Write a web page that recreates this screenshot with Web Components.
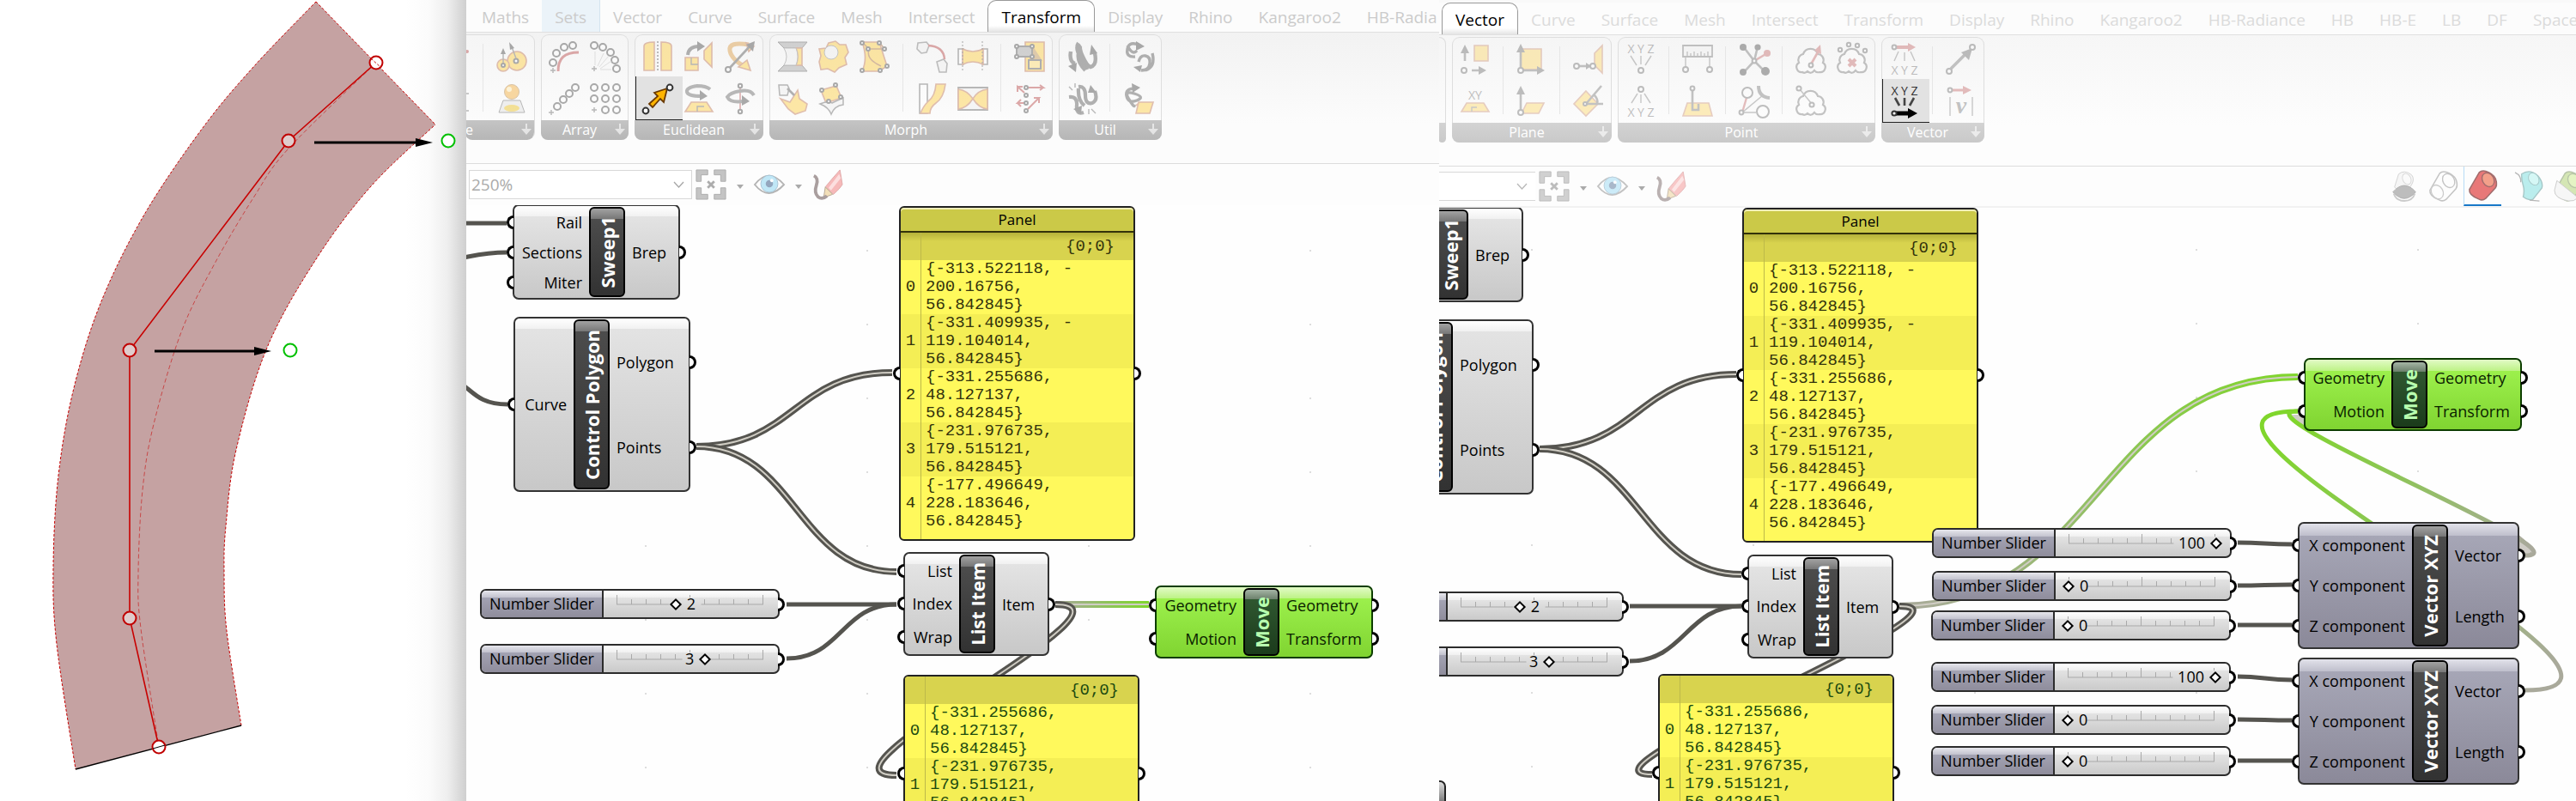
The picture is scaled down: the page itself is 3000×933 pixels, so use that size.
<!DOCTYPE html>
<html lang="en">
<head>
<meta charset="utf-8">
<title>Moving control points</title>
<style>
html, body { height: 100%; margin: 0; }
body {
  display: grid;
  grid-template-columns: 543fr 1133fr 1324fr;
  background: #fff;
  color: #000;
  font: 18px/24px "Open Sans", "Noto Sans", sans-serif;
  overflow: hidden;
}
</style>
</head>
<body>
<rhino-viewport></rhino-viewport>

<gh-window>
  <tab-strip slot="tabs" tabs="Maths,Sets,Vector,Curve,Surface,Mesh,Intersect,Transform,Display,Rhino,Kangaroo2,HB-Radia" active="Transform" hover="Sets"></tab-strip>
  <ribbon-group slot="groups" class="first" label="e" sections="dots/dots2|orbs/orb"></ribbon-group>
  <ribbon-group slot="groups" label="Array" sections="arrcurve,arrpolar/arrline,arrgrid"></ribbon-group>
  <ribbon-group slot="groups" label="Euclidean" selected="move" sections="mirror,orient,rot3d/move,rotate,rotaxis"></ribbon-group>
  <ribbon-group slot="groups" label="Morph" sections="boxmorph,gear,twist/bag,sheet|hands,maelstrom/flow,taper|project/field"></ribbon-group>
  <ribbon-group slot="groups" label="Util" sections="split/split2|group/ungroup"></ribbon-group>
  <zoom-bar slot="bar" zoom="250%"></zoom-bar>
  <gh-canvas pan-x="543" pan-y="239">
    <gh-wires set="a"></gh-wires>
    <gh-node x="597" y="238" w="195" h="111" in="89" name="Sweep1" inputs="Rail,Sections,Miter" outputs="Brep"></gh-node>
    <gh-node x="598" y="369" w="206" h="204" in="70" name="Control Polygon" inputs="Curve" outputs="Polygon,Points"></gh-node>
    <gh-panel x="1047" y="240" w="275" h="390" name="Panel" rows="{-313.522118, -;200.16756,;56.842845}|{-331.409935, -;119.104014,;56.842845}|{-331.255686,;48.127137,;56.842845}|{-231.976735,;179.515121,;56.842845}|{-177.496649,;228.183646,;56.842845}"></gh-panel>
    <gh-slider x="559" y="686" value="4" text="2" side="right" gap="36 58"></gh-slider>
    <gh-slider x="559" y="750" value="6" text="3" side="left" gap="45 64"></gh-slider>
    <gh-node x="1052" y="643" w="170" h="121" in="65" name="List Item" inputs="List,Index,Wrap" outputs="Item"></gh-node>
    <gh-node class="green" x="1345" y="682" w="254" h="85" in="103" name="Move" inputs="Geometry,Motion" outputs="Geometry,Transform"></gh-node>
    <gh-panel class="picked" x="1052" y="786" w="275" h="230" rows="{-331.255686,;48.127137,;56.842845}|{-231.976735,;179.515121,;56.842845}"></gh-panel>
  </gh-canvas>
</gh-window>

<gh-window class="second">
  <tab-strip slot="tabs" tabs="Vector,Curve,Surface,Mesh,Intersect,Transform,Display,Rhino,Kangaroo2,HB-Radiance,HB,HB-E,LB,DF,Space" active="Vector"></tab-strip>
  <ribbon-group slot="groups" class="edge" label="" sections=""></ribbon-group>
  <ribbon-group slot="groups" label="Plane" sections="plnorm/plxy|plorig/plcons|plalign/plrot"></ribbon-group>
  <ribbon-group slot="groups" label="Point" sections="ptxyz/ptdec|dist/ptproj|hub/closest|cloudarrow,cloudx/cloudpt,"></ribbon-group>
  <ribbon-group slot="groups" label="Vector" selected="vecxyz" sections="vecdec/vecxyz|vec2pt/veclen"></ribbon-group>
  <zoom-bar slot="bar" zoom="" previews></zoom-bar>
  <gh-canvas pan-x="1676" pan-y="243">
    <gh-wires set="b"></gh-wires>
    <gh-node x="1579" y="242" w="195" h="111" in="89" name="Sweep1" inputs=",," outputs="Brep"></gh-node>
    <gh-node x="1580" y="373" w="206" h="204" in="70" name="Control Polygon" inputs="" outputs="Polygon,Points"></gh-node>
    <gh-panel x="2029" y="243" w="275" h="390" name="Panel" rows="{-313.522118, -;200.16756,;56.842845}|{-331.409935, -;119.104014,;56.842845}|{-331.255686,;48.127137,;56.842845}|{-231.976735,;179.515121,;56.842845}|{-177.496649,;228.183646,;56.842845}"></gh-panel>
    <gh-slider class="nolabel" x="1542" y="690" value="4" text="2" side="right" gap="36 58"></gh-slider>
    <gh-slider class="nolabel" x="1542" y="754" value="6" text="3" side="left" gap="45 64"></gh-slider>
    <gh-node x="2035" y="647" w="170" h="121" in="65" name="List Item" inputs="List,Index,Wrap" outputs="Item"></gh-node>
    <gh-panel class="picked" x="1931" y="786" w="275" h="230" rows="{-331.255686,;48.127137,;56.842845}|{-231.976735,;179.515121,;56.842845}"></gh-panel>
    <gh-node x="1604" y="910" w="80" h="80" in="20" name="" inputs="" outputs="" class="stub"></gh-node>
    <gh-node class="green" x="2683" y="418" w="254" h="85" in="102" name="Move" inputs="Geometry,Motion" outputs="Geometry,Transform"></gh-node>
    <gh-slider x="2250" y="616" value="10" text="100" side="left" gap="72 100"></gh-slider>
    <gh-slider x="2250" y="666" value="0" text="0" side="right" gap="0 13"></gh-slider>
    <gh-slider x="2249" y="712" value="0" text="0" side="right" gap="0 13"></gh-slider>
    <gh-slider x="2249" y="772" value="10" text="100" side="left" gap="72 100"></gh-slider>
    <gh-slider x="2249" y="822" value="0" text="0" side="right" gap="0 13"></gh-slider>
    <gh-slider x="2249" y="870" value="0" text="0" side="right" gap="0 13"></gh-slider>
    <gh-node class="slate" x="2676" y="609" w="258" h="148" in="133" name="Vector XYZ" inputs="X component,Y component,Z component" outputs="Vector,Length"></gh-node>
    <gh-node class="slate" x="2676" y="767" w="258" h="148" in="133" name="Vector XYZ" inputs="X component,Y component,Z component" outputs="Vector,Length"></gh-node>
  </gh-canvas>
</gh-window>

<script>
const Y = 'fill="#ffc928" stroke="#b8643c" stroke-width="1.6"';
const G = 'fill="none" stroke="#444" stroke-width="2.6"';
const T = 'fill="none" stroke="#555" stroke-width="1.4"';
const o = (x, y, r = 3) => `<circle cx="${x}" cy="${y}" r="${r}" fill="#fff" stroke="#333" stroke-width="2"/>`;
const d = (a, p) => `<path ${a} d="${p}"/>`;
const tx = (y, s) => `<text x="18" y="${y}" text-anchor="middle" font-size="14" font-family="Open Sans" fill="#333">${s}</text>`;
const K = 'fill="#333"', R = '#b03030';
const cloud = d('fill="#fff" stroke="#444" stroke-width="2.2"', 'M8 33a6 6 0 0 1-4-11a7 7 0 0 1 5-10a9 9 0 0 1 17 0a7 7 0 0 1 6 10a6 6 0 0 1-4 11q-4 1-6-2q-4 5-8 1q-3 3-6 1z');

/* 36x36 drawings of the ribbon tools */
const ICONS = {
  dots: `<circle cx="1" cy="12" r="2" fill="${R}"/>`,
  dots2: d(T, 'M0 12h3M0 32h3'),
  orbs: `<circle cx="24" cy="23" r="11" ${Y}/><circle cx="8" cy="28" r="7" ${Y}/>` + o(23, 23, 2.5) + o(8, 28, 2) + d(T, 'M23 20L17 4M8 25V12') + d(K, 'M15 1l1 9 5-2zM8 8l-3 7h6z'),
  orb: `<path fill="#ddd" stroke="#555" d="M8 20h20l5 14H3z"/><ellipse cx="18" cy="29" rx="9" ry="4" fill="#e8b800"/><circle cx="18" cy="10" r="8.5" fill="#f5a31c" stroke="#a8742c"/><circle cx="15" cy="7" r="3" fill="#ffe9a8"/>`,
  arrcurve: d(`fill="none" stroke="${R}" stroke-width="3"`, 'M11 35C11 20 18 13 35 13') + o(28, 5, 4) + o(18, 7, 4) + o(9, 14, 4) + o(5, 25, 4) + d(T, 'M5 31v6M2 34h6'),
  arrpolar: o(5, 5, 4) + o(15, 7, 4) + o(24, 13, 4) + o(29, 22, 4) + o(31, 32, 4) + d(T, 'M5 29v6M2 32h6') + d('fill="none" stroke="#bbb"', 'M6 28V12M9 29l7-15M11 30l11-13M12 32l13-9M12 33h13'),
  arrline: o(31, 5, 4) + o(24, 12, 4) + o(17, 19, 4) + o(10, 27, 4) + d(T, 'M3 31v6M0 34h6'),
  arrgrid: [5, 18, 31].map(y => [5, 18, 31].map(x => x == 5 && y == 31 ? d(T, 'M5 28v6M2 31h6') : o(x, y, 4)).join('')).join(''),
  mirror: d(Y, 'M2 34V6q0-5 12-5v33zM34 34V6q0-5-12-5v33z') + d('fill="none" stroke="#333" stroke-dasharray="2 2" stroke-width="1.5"', 'M18 0v36'),
  orient: d(Y, 'M2 19h15v15H2zM33 2v28l-9-9V11z') + d(T, 'M9 19v8h8') + d('fill="none" stroke="#444" stroke-width="4"', 'M5 16Q6 6 18 6') + d(K, 'M16 0l9 6-9 6z'),
  rot3d: d('fill="none" stroke="#d8902c" stroke-width="5"', 'M28 4Q4 0 6 11t20 20') + d(Y, 'M30 34l-14-4 10-8zM25 2l9 4-6 6z') + d(G, 'M5 32L30 5') + d(K, 'M35 0l-2 12-8-8z') + o(4, 33, 3),
  move: d('fill="#ffb400" stroke="#6b3a00" stroke-width="1.8"', 'M8 24l10-9-4-4 15-5-4 16-4-4-9 10z') + o(32, 5, 3.4) + o(4, 32, 3.4),
  rotate: d('fill="none" stroke="#555" stroke-width="4"', 'M31 7Q26 3 16 3Q3 5 4 10t17 5') + d(K, 'M19 8l9 7-9 5z') + d(Y, 'M9 22h18l7 11H2z') + d(T, 'M16 33v-6h8'),
  rotaxis: d(`fill="none" stroke="${R}" stroke-width="1.5"`, 'M18 3v30') + d('fill="none" stroke="#555" stroke-width="4"', 'M34 14Q30 7 18 9T3 16Q6 23 22 21') + d(K, 'M20 14l9 7-9 5z') + o(18, 3, 2.2) + o(18, 33, 2.2),
  boxmorph: d('fill="#999" stroke="#444"', 'M1 1h34l-6 7H8zM1 35h34l-6-7H8z') + d(Y, 'M22 8h7v20h-7q4-10 0-20z') + d('fill="#eee" stroke="#777"', 'M8 8q6 10 0 20h14q4-10 0-20z'),
  gear: d(Y, 'M12 2l8-2 5 4 7 0 3 9-4 6 2 8-9 4-5 5-8-4-8 1-2-9 2-7-2-8 8-1z') + '<circle cx="15" cy="13" r="8" fill="#eee" stroke="#777"/>',
  twist: d(Y, 'M3 1h20l9 28-9 6H3q7-15 0-34z') + d('fill="none" stroke="#9c5a20" stroke-width="1.5"', 'M3 1l8 8h18l-6-8M11 9q-4 12 14 20') + o(3, 2, 2) + o(23, 2, 2) + o(10, 9, 2) + o(29, 9, 2) + o(32, 29, 2) + o(3, 34, 2) + o(24, 34, 2),
  bag: d('fill="#eee" stroke="#555" stroke-width="1.5"', 'M2 2h10l2 4-2 8H3z') + d(Y, 'M4 18l11 4 9-14 2 10 9 6-2 8-12 4-8-6z') + d(G, 'M12 6l8 8'),
  sheet: d(Y, 'M3 8l18-5 6 14-18 6z') + d('fill="#eee" stroke="#555" stroke-width="1.5"', 'M2 24q10-4 14-1 6-3 13-6v8q-10 1-14 11-3-8-13-12z') + o(4, 8, 2) + o(20, 2, 2) + o(26, 16, 2) + o(12, 21, 2),
  hands: d('fill="#eee" stroke="#666" stroke-width="1.6"', 'M2 2l10-1 3 4-3 8-6 1-5-5zM24 24l8-3 4 5-1 10h-8z') + d(`fill="none" stroke="${R}" stroke-width="2.5"`, 'M14 5Q32 6 33 21'),
  maelstrom: d('fill="#fff" stroke="#555" stroke-width="1.6"', 'M1 9h6v18H1zM29 9h6v18h-6z') + d(Y, 'M6 9q12 6 24 0v18q-12-6-24 0z') + d('fill="none" stroke="#333" stroke-dasharray="2 2"', 'M6 0v36M29 0v36'),
  flow: d('fill="#fff" stroke="#555" stroke-width="1.6"', 'M4 1h9v34H4z') + d(Y, 'M5 35q3-8 9-14 8-6 9-20h11q-2 16-11 22-7 5-7 12z'),
  taper: d('fill="#eee" stroke="#555" stroke-width="1.8"', 'M1 5h34v26H1z') + d(Y, 'M1 7q10 1 17 11Q11 29 1 30zM35 7q-11 1-17 11 7 11 17 12z'),
  project: d(Y, 'M13 1h22v34H13z') + d('fill="#b8863c"', 'M22 6l11 17H17z') + d('fill="#ffd75a" stroke="#444" stroke-width="2"', 'M17 22h14v10H17z') + d('fill="#999" stroke="#444" stroke-width="2"', 'M3 6h18v12H3z') + o(3, 6, 2) + o(21, 6, 2) + o(3, 18, 2) + o(21, 18, 2),
  field: d(`fill="none" stroke="${R}" stroke-width="2"`, 'M14 5h20l-4-3m4 3l-4 3M12 11L4 4v6m0-6h6M12 23H4l4-4m-4 4l4 4M16 30l13-13h-6m6 0v6') + o(14, 5, 2) + o(14, 14, 2) + o(14, 23, 2) + o(14, 32, 2),
  split: d('fill="none" stroke="#444" stroke-width="4.4"', 'M5 12q-2 12 5 14M14 2q-4 6 2 16t8 15M17 5q-3 2 2 13t9 12q8-2 5-16M14 14q-2 10 8 20') + d(K, 'M27 16l2-12 7 10zM2 29l10-4-1 11z'),
  split2: d('fill="none" stroke="#444" stroke-width="4.2"', 'M3 16q10-1 9 10t8 8M14 4q8-1 8 10t8 9q7-3 3-14M14 6q-1 14 7 20') + d(K, 'M25 11l3-9 7 9zM8 30l10-4-1 10z') + d(T, 'M3 4l4 4M10 0v5M29 30l5 5M26 30v6'),
  group: d('fill="none" stroke="#444" stroke-width="3.4"', 'M20 5Q7-1 5 9t9 9M5 5q6 12 11 6M18 24q2-8 8-7t5 9-10 8M34 14q4 16-8 20') + d(K, 'M15 0l10 6-10 5zM22 28l-10 2 8 6z'),
  ungroup: d('fill="none" stroke="#444" stroke-width="3.4"', 'M14 6Q2 6 4 15t12 5-3-8-6 7 6 6') + d(K, 'M10 0l10 5-9 6z') + d(Y, 'M18 22h17l-4 13H15zM15 26l4-4'),
  plnorm: d(Y, 'M17 2h16v18H17z') + d(G, 'M6 20V8M14 31h9') + d(K, 'M6 1l-5 10h10zM31 31l-9-5v10z') + o(5, 31),
  plxy: tx(16, 'XY') + d(Y, 'M8 20h20l6 10H2z') + d(T, 'M14 30v-5h6'),
  plorig: d(Y, 'M5 6h24v24H5z') + d(G, 'M5 30V8M5 31h20') + d(K, 'M5 0L0 10h10zM33 31l-9-5v10z') + o(5, 31),
  plcons: d(Y, 'M12 20h20l-6 12H6z') + d(G, 'M5 30V8') + d(K, 'M5 0L0 10h10z') + o(5, 31),
  plalign: d(Y, 'M34 2v32l-9-9V11z') + d(G, 'M6 26h14') + d(K, 'M21 26l-6-4v8z') + o(4, 26) + o(23, 26),
  plrot: d(Y, 'M15 6l14 15-14 14L1 21z') + d(G, 'M15 21L33 0M24 10q6 6 4 11M15 21h20') + o(14, 21, 2),
  ptxyz: tx(11, 'X Y Z') + d(T, 'M6 14l7 11M18 14v10M30 14l-7 11') + o(18, 31),
  ptdec: tx(36, 'X Y Z') + d(T, 'M14 9L7 20M18 10v10M22 9l7 11') + o(18, 4),
  dist: d('fill="#eee" stroke="#444" stroke-width="1.8"', 'M1 2h34v13H1z') + d(T, 'M6 14V9M10 14v-3M14 14V9M18 14v-3M22 14V9M26 14v-3M30 14V9M4 15v13M32 15v13') + o(4, 30) + o(32, 30),
  ptproj: d(Y, 'M6 20h25l4 15H1z') + d(G, 'M12 4v24h7v-7') + o(12, 3, 2.4),
  hub: d(G, 'M18 20L5 3M18 20L22 3M18 20L5 34M18 20l13 13') + d(`stroke="${R}" stroke-width="2.6"`, 'M18 20L33 11') + `<circle cx="5" cy="4" r="4"/><circle cx="22" cy="4" r="3.6"/><circle cx="5" cy="33" r="4"/><circle cx="31" cy="32" r="5"/><circle cx="33" cy="11" r="4" fill="${R}"/>` + o(18, 20, 2.4),
  closest: d(T, 'M4 31L28 11M4 31h16') + d(`stroke="${R}" stroke-width="2.4"`, 'M4 31L9 14') + d('fill="none" stroke="#444" stroke-width="4"', 'M23 0q0 13 13 14') + o(10, 8, 6) + o(28, 30, 7) + o(3, 31, 2.4),
  cloudarrow: cloud + d(`stroke="${R}" stroke-width="2.6"`, 'M18 24L27 8') + `<path fill="${R}" d="M29 1l1 11-8-4z"/>` + o(18, 25, 2.4),
  cloudx: cloud + d(`stroke="${R}" stroke-width="4"`, 'M14 18l8 8M22 18l-8 8') + o(4, 7, 2.2) + o(14, 1, 2.2) + o(24, 2, 2.2) + o(33, 8, 2.2),
  cloudpt: cloud + d(T, 'M5 4l14 17') + o(4, 3, 2.6) + o(19, 22, 2.6),
  vecdec: d(`stroke="${R}" stroke-width="4"`, 'M8 4h14') + `<path fill="${R}" d="M31 4l-9-5v10z"/>` + d(T, 'M11 9L6 20M18 10v10M25 9l5 11') + tx(36, 'X Y Z') + o(6, 4, 2.4),
  vecxyz: tx(11, 'X Y Z') + d(G, 'M7 14l5 9M18 14v9M29 14l-5 9') + d('stroke="#000" stroke-width="5"', 'M8 32h14') + d('fill="#000"', 'M33 32l-11-6v12z') + o(6, 32, 2.6),
  vec2pt: d('stroke="#444" stroke-width="3.6"', 'M6 29L24 11') + d(K, 'M31 5l-4 14-9-9z') + o(4, 32) + o(31, 4),
  veclen: d(`stroke="${R}" stroke-width="3"`, 'M8 5h12') + `<path fill="${R}" d="M30 5l-10-5v10z"/>` + d(T, 'M5 13v22M31 13v22') + `<text x="18" y="32" text-anchor="middle" font-size="28" font-style="italic" font-weight="bold" font-family="Liberation Serif" fill="#444">v</text>` + o(5, 5, 2.4),
  fit: d('fill="#888" stroke="#555"', 'M1 1h14v6H7v8H1zM37 1H23v6h8v8h6zM1 37h14v-6H7v-8H1zM37 37H23v-6h8v-8h6z') + d('stroke="#555" stroke-width="3"', 'M15 15l8 8M23 15l-8 8'),
  eye: d('fill="#fff" stroke="#666" stroke-width="2"', 'M1 19Q18-3 37 19 18 40 1 19z') + '<circle cx="19" cy="18" r="10.5" fill="#7fd0f0" stroke="#4d86a8"/><circle cx="19" cy="18" r="4.5" fill="#234a78"/><circle cx="22" cy="14" r="2" fill="#fff"/>',
  pencil: d('fill="#f07070" stroke="#c05050"', 'M34 1Q24 12 16 22l10 9Q34 24 37 19z') + d('fill="#fbc0c0"', 'M33 6L20 23l3 3 12-15z') + d('fill="#e8c070" stroke="#6b4a20"', 'M16 22l9 9-11 4z') + d('fill="none" stroke="#503838" stroke-width="4"', 'M2 8q6 3 3 12t2 14q5 4 11-1')
};
const cyl = (fill, inner, edge) => d(`fill="${fill}" stroke="${edge}" stroke-width="1.6"`, 'M2 24L14 3Q18-1 26 3T35 14q1 5-1 8L22 35q-4 3-8 1Q1 31 2 24z') + `<ellipse cx="25" cy="12" rx="7" ry="9" transform="rotate(-30 25 12)" fill="${inner}" stroke="${edge}" stroke-width="1.4"/>`;
Object.assign(ICONS, {
  pvnone: d('fill="#eee" stroke="#999"', 'M6 20L11 4Q18-2 27 5q4 5 0 12l-4 6H9z') + '<ellipse cx="21" cy="10" rx="5" ry="7" fill="#f8f8f8" stroke="#aaa" transform="rotate(-25 21 10)"/>' + d('fill="#666" stroke="#444"', 'M4 26q14-16 28 0-14 16-28 0z') + d('fill="none" stroke="#888" stroke-width="2"', 'M5 28q3 9 13 9t13-9'),
  pvwire: cyl('none', 'none', '#777') + '<ellipse cx="11" cy="26" rx="7" ry="9" transform="rotate(-30 11 26)" fill="none" stroke="#888" stroke-width="1.4"/>',
  pvshade: cyl('#e04040', '#f07a5a', '#7a3030'),
  pvsel: d('fill="#60d8d8" stroke="#308080" stroke-width="1.5"', 'M8 4Q18-3 28 6q7 8 5 15L22 35q-6 2-12-3 2-8 0-14T8 4z') + '<ellipse cx="23" cy="10" rx="6" ry="8" transform="rotate(-30 23 10)" fill="#a0f0ec" stroke="#308080"/>' + d(T, 'M0 2q8 4 7 12M18 36l12 1'),
  pvqual: cyl('#9cc850', '#c4e878', '#5a7a38') + d('fill="#eee" stroke="#888"', 'M4 12l26 21q-5 5-12 4Q1 34 1 24z')
});

const svg = (n, size = 36, vb = 36) => `<svg width="${size}" height="${size}" viewBox="0 0 ${vb} ${vb}" aria-hidden="true">${ICONS[n]}</svg>`;

/* A base that fills an open shadow root from the class's own render() */
class Part extends HTMLElement {
  constructor() { super(); this.attachShadow({ mode: 'open' }); }
  connectedCallback() { this.shadowRoot.innerHTML = this.render(); }
  a(n) { return this.getAttribute(n) || ''; }
}
/* A part with a place on the free canvas */
class Placed extends Part {
  connectedCallback() {
    for (const n of ['x', 'y', 'w', 'h']) if (this.hasAttribute(n)) this.style.setProperty('--' + n, this.a(n) + 'px');
    super.connectedCallback();
  }
}
const PLACED = `position: absolute; left: var(--x); top: var(--y); width: var(--w); height: var(--h); box-sizing: border-box;`;
const PORT = `
  .port { position: absolute; width: 8px; height: 16px; box-sizing: border-box; border: 3px solid #000; background: #fff; }
  .port.l { left: -8px; border-right: 0; border-radius: 8px 0 0 8px; }
  .port.r { right: -8px; border-left: 0; border-radius: 0 8px 8px 0; }`;

/* Passes the points through as one smooth curve */
const smooth = p => {
  let s = `M${p[0]}`;
  for (let i = 0; i < p.length - 1; i++) {
    const a = p[i - 1] || p[i], b = p[i], c = p[i + 1], e = p[i + 2] || c;
    s += `C${b[0] + (c[0] - a[0]) / 6} ${b[1] + (c[1] - a[1]) / 6} ${c[0] - (e[0] - b[0]) / 6} ${c[1] - (e[1] - b[1]) / 6} ${c[0]} ${c[1]}`;
  }
  return s;
};

customElements.define('rhino-viewport', class extends Part {
  render() {
    const outer = smooth([[368, 2], [296, 77], [236, 149], [168, 250], [118, 351], [86, 452], [68, 554], [62, 661], [66, 750], [88, 896]]);
    const inner = smooth([[281, 845], [264, 735], [261, 667], [263, 613], [275, 524], [311, 405], [368, 302], [432, 217], [507, 145]]);
    const mid = smooth([[438, 73], [336, 173], [296, 229], [250, 307], [211, 387], [179, 494], [166, 571], [161, 667], [164, 732], [185, 870]]);
    const red = 'fill="none" stroke="#c80000"';
    const arrow = (x, y, e) => `<path stroke="#000" stroke-width="3" d="M${x} ${y}H${e - 15}"/><path d="M${e} ${y}l-20-5v10z"/>`;
    return `<style>
      :host { display: block; overflow: hidden; background: linear-gradient(to right, #fff 87%, #fbfbfb 92%, #eee 96%, #cfcfcf); }
      svg { display: block; width: 100%; height: 100%; }
    </style>
    <svg role="img" aria-label="Control points of a curved surface">
      <path fill="#c5a2a2" d="${outer}L281 845${inner.replace(/^M[\d,]+/, '')}Z"/>
      <path ${red} stroke-dasharray="3 2" d="${outer}"/><path ${red} stroke-dasharray="3 2" d="${inner}"/>
      <path ${red} stroke-dasharray="3 2" d="M368 2L507 145"/>
      <path stroke="#000" stroke-width="1.4" d="M88 896L281 845"/>
      <path ${red} stroke-width=".8" stroke-opacity=".7" stroke-dasharray="5 3" d="${mid}"/>
      <path ${red} stroke-width="1.6" d="M438 73L336 164 151 408V720L185 870"/>
      ${[[438, 73, '#fff'], [336, 164, '#dfcccc'], [151, 408, '#dfcccc'], [151, 720, '#dfcccc'], [185, 870, '#fff']].map(([x, y, f]) => `<circle cx="${x}" cy="${y}" r="7.5" fill="${f}" stroke="#c00000" stroke-width="2"/>`).join('')}
      <path ${red} stroke-dasharray="3 2" d="M432 68l12 11"/><path stroke="#000" d="M178 872l14-4"/>
      ${arrow(366, 166, 504)}${arrow(180, 409, 316)}
      <circle cx="522" cy="164" r="7.5" fill="#fff" stroke="#00c000" stroke-width="2"/>
      <circle cx="338" cy="408" r="7.5" fill="#fff" stroke="#00c000" stroke-width="2"/>
    </svg>`;
  }
});

customElements.define('gh-window', class extends Part {
  render() {
    return `<style>
      :host { display: flex; flex-direction: column; min-width: 0; overflow: hidden; --tab-ink: #cbcbcb; --fade: .4; --label: linear-gradient(#c4c4c4, #b6b6b6); background: #fbfbfb; }
      :host(.second) { --tab-ink: #dbdbdb; --fade: .3; --label: linear-gradient(#d3d3d3, #c9c9c9); border-top: 3px solid #f9f9f9; }
      .groups { display: flex; gap: 7px; padding: 2px 0 27px; background: linear-gradient(#f2f2f2, #fcfcfc 70%); border-bottom: 1px solid #dcdcdc; }
      :host(.second) .groups { background: linear-gradient(#f6f6f6, #fdfdfd 70%); }
      ::slotted(gh-canvas) { flex: 1; }
    </style>
    <slot name="tabs"></slot>
    <div class="groups"><slot name="groups"></slot></div>
    <slot name="bar"></slot>
    <slot></slot>`;
  }
});

customElements.define('tab-strip', class extends Part {
  render() {
    return `<style>
      :host { display: flex; flex: none; height: 37px; padding-left: 3px; border-bottom: 1px solid #e0e0e0; overflow: hidden; background: #fcfcfc; }
      button { flex: none; height: 37px; margin: 0; padding: 2px 15px 0; border: 0; background: none; color: var(--tab-ink); font: inherit; font-size: 19px; line-height: 32px; white-space: nowrap; }
      .hover { background: #ebf3f9; border-right: 1px solid #d5e4ef; }
      .active { color: #000; background: linear-gradient(#fff 80%, #e4e4e4); border: 1px solid #999; border-bottom: 0; border-radius: 10px 10px 0 0; }
    </style>` + this.a('tabs').split(',').map(t => `<button type="button" class="${t == this.a('active') ? 'active' : t == this.a('hover') ? 'hover' : ''}">${t}</button>`).join('');
  }
});

customElements.define('ribbon-group', class extends Part {
  render() {
    const body = this.a('sections').split('|').map(s => {
      const rows = s.split('/').map(r => r.split(','));
      return `<div class="section" style="--n:${rows[0].length}">` + rows.flat().map(n => n ? `<button type="button" aria-label="${n}" class="${n == this.a('selected') ? 'on' : ''}">${svg(n)}</button>` : '').join('') + '</div>';
    }).join('<i></i>');
    return `<style>
      :host { display: flex; flex: none; flex-direction: column; box-sizing: border-box; height: 123px; border: 1px solid #dedede; border-bottom: 0; border-radius: 9px; background: linear-gradient(#f5f5f5, #fdfdfd); }
      :host(.first) { border-left: 0; width: 80px; overflow: hidden; border-radius: 0 9px 9px 0; }
      :host(.first) .section:first-child { width: 14px; overflow: hidden; }
      :host(.first) .section:first-child button { width: 14px; justify-content: flex-start; }
      :host(.first) .label span { text-align: left; }
      :host(.edge) { width: 8px; border-left: 0; border-radius: 0 9px 9px 0; }
      .icons { display: flex; height: 99px; padding: 0 2px; }
      :host(.first) .icons { padding-left: 0; }
      .section { display: grid; grid-template-columns: repeat(var(--n), 48px); grid-auto-rows: 49px; }
      i { width: 1px; margin: 10px 9px 10px 8px; background: #e6e6e6; }
      button { position: relative; display: flex; align-items: center; justify-content: center; padding: 0; border: 0; background: none; }
      svg { opacity: var(--fade); overflow: visible; z-index: 1; }
      .on svg { opacity: 1; }
      .on::before { content: ""; position: absolute; inset: -1px -5px -1px -2px; background: #e2e2e2; border-left: 1px solid #222; border-bottom: 1px solid #222; }
      .label { display: flex; align-items: center; flex: 1; margin: 0 -1px; padding: 0 4px 2px; color: #fff; font-size: 16px; line-height: 20px; background: var(--label); border-radius: 0 0 8px 8px; }
      :host(.first) .label { padding-left: 0; }
      .label span { flex: 1; text-align: center; }
      .label svg { opacity: .6; }
      :host(.edge) .label svg { display: none; }
    </style>
    <div class="icons">${this.a('sections') ? body : ''}</div>
    <div class="label"><span>${this.a('label')}</span><svg width="12" height="14" viewBox="0 0 12 14"><path fill="#fff" d="M5 0h2v6h5l-6 7-6-7h5z"/></svg></div>`;
  }
});

customElements.define('zoom-bar', class extends Part {
  render() {
    const b = (n, c = '') => `<button type="button" class="${c}" aria-label="${n}">${svg(n, 36, 38)}</button>`;
    return `<style>
      :host { display: flex; flex: none; align-items: center; height: 48px; padding-left: 3px; background: #fdfdfd; overflow: hidden; }
      :host([previews]) { height: 46px; padding-left: 0; border-bottom: 2px solid #f2f2f2; }
      .box { position: relative; display: flex; margin-right: 4px; }
      select { appearance: none; box-sizing: border-box; width: 260px; height: 34px; padding: 0 2px; border: 1px solid #d8d8d8; background: #fff; color: #aaa; font: inherit; font-size: 19px; line-height: 30px; border-radius: 0; }
      :host([previews]) select { width: 112px; border-left: 0; border-right: 0; }
      .chev { position: absolute; right: 9px; top: 13px; pointer-events: none; }
      button { display: flex; align-items: center; justify-content: center; box-sizing: border-box; height: 46px; padding: 0; border: 0; background: none; }
      svg { opacity: calc(var(--fade) + .08); overflow: visible; }
      .caret { width: 0; height: 0; margin: 5px 12px 0; border: 4px solid transparent; border-top: 5px solid #aaa; border-bottom: 0; }
      .views { display: flex; gap: 1px; margin: 0 -14px 0 auto; }
      .views button { width: 44px; }
      .views svg { opacity: .42; }
      .views .on { border-left: 1px solid #b8dcf5; border-bottom: 2px solid #1878c8; }
      .views .on svg { opacity: .7; }
      .gap { margin-right: 11px; }
    </style>
    <div class="box"><select aria-label="Zoom"><option>${this.a('zoom')}</option></select><svg class="chev" width="13" height="9" viewBox="0 0 13 9"><path fill="none" stroke="#444" stroke-width="1.3" d="M1 1l5.5 6L12 1"/></svg></div>
    ${b('fit')}<span class="caret"></span>${b('eye')}<span class="caret"></span>${b('pencil')}
    ${this.hasAttribute('previews') ? `<div class="views">${b('pvnone')}${b('pvwire')}${b('pvshade', 'on gap')}${b('pvsel')}${b('pvqual')}</div>` : ''}`;
  }
});

customElements.define('gh-canvas', class extends Part {
  render() {
    return `<style>
      :host { display: block; position: relative; overflow: hidden; background: #fefefe; min-height: 0; }
      .plane { position: absolute; left: -${this.a('pan-x')}px; top: -${this.a('pan-y')}px; width: 3200px; height: 1100px;
        background: radial-gradient(circle at 1px 1px, #ddd 1px, transparent 1px) 235px 33px / 258px 86px; }
    </style><div class="plane"><slot></slot></div>`;
  }
});

customElements.define('gh-node', class extends Placed {
  render() {
    const list = (n, side) => this.a(n) || n == 'inputs' ? `<div class="${n}">${this.a(n).split(',').map(t => `<span class="row">${t}<b class="port ${side}"></b></span>`).join('')}</div>` : '';
    return `<style>
      :host { ${PLACED} display: grid; grid-template-columns: ${+this.a('in') - 2}px 42px 1fr; border: 2px solid #333; border-radius: 7px;
        background: linear-gradient(#fff, #f1f1f1 12px, #e3e3e3 12px, #c8c8c8);
        --pill: linear-gradient(#a2a2a2, #777 12px, #4c4c4c 12px, #323232); --pill-ink: #fff; }
      :host(.slate) { background: linear-gradient(#e2e2ea, #bfbfcc 14px, #a6a6b6 14px, #8b8999); }
      :host(.green) { border-color: #0c3d00; color: #0a2200; background: linear-gradient(#e2fbc6, #bdf286 13px, #9cf04c 13px, #80d431);
        --pill: linear-gradient(#a4b4a4, #6c806c 11px, #2f5730 11px, #1b3b1b); --pill-ink: #b9ffb0; }
      :host(.stub) { background: linear-gradient(#ddd, #777 24px); border-color: #222; }
      :host(.stub) > *, :host(.stub) .pill, :host(.stub) .inputs { display: none; }
      .inputs, .outputs { display: flex; flex-direction: column; padding: 1px 8px; }
      .inputs { text-align: right; }
      .row { display: flex; flex: 1; align-items: center; white-space: nowrap; }
      .inputs .row { justify-content: flex-end; }
      .pill { display: flex; align-items: center; justify-content: center; margin: 1px 0; border: 2px solid #000; border-radius: 6px; background: var(--pill); color: var(--pill-ink); overflow: hidden; }
      .pill span { writing-mode: vertical-rl; transform: rotate(180deg); font-size: 22px; font-weight: 700; line-height: 32px; white-space: nowrap; }
      ${PORT}
      .port.l { left: -9px; } .port.r { right: -9px; }
    </style>${list('inputs', 'l')}<div class="pill"><span>${this.a('name')}</span></div>${list('outputs', 'r')}`;
  }
});

customElements.define('gh-panel', class extends Placed {
  render() {
    return `<style>
      :host { ${PLACED} border: 2px solid #222; border-radius: 6px; background: #fff95c; color: #33330c; font: 19px/21px "Liberation Mono", monospace; }
      :host(.picked) { color: #1c4a10; }
      header { height: 27px; border-bottom: 2px solid #33320a; background: #cbc948; border-radius: 4px 4px 0 0; color: #000; text-align: center; font: 17px/27px "Open Sans", "Noto Sans", sans-serif; box-shadow: inset 0 2px #efedb8; }
      .clip { overflow: hidden; height: 100%; border-radius: 4px; }
      table { width: 100%; height: 100%; border-collapse: collapse; }
      th, td { padding: 0; font-weight: inherit; vertical-align: middle; }
      th { width: 23px; border-right: 1px solid #bdb94a; }
      .path { height: 32px; background: linear-gradient(#b5b23a, #d8d34e 10px); text-align: right; }
      :host(.picked) .path { background: #d8d34e; }
      .path td { padding-right: 22px; }
      .item { height: 63px; }
      .item:nth-child(odd) { background: #f4ee55; }
      .item td { padding-left: 5px; white-space: pre; }
      ${PORT}
      .port { top: calc(50% - 8px); } .port.l { left: -9px; } .port.r { right: -9px; }
    </style>
    <div class="clip">${this.a('name') ? `<header>${this.a('name')}</header>` : ''}
    <table><tbody><tr class="path"><th></th><td>{0;0}</td></tr>
    ${this.a('rows').split('|').map((r, i) => `<tr class="item"><th scope="row">${i}</th><td>${r.replace(/;/g, '<br>')}</td></tr>`).join('')}
    <tr><th></th><td></td></tr></tbody></table></div>
    <b class="port l"></b><b class="port r"></b>`;
  }
});

customElements.define('gh-slider', class extends Placed {
  render() {
    const p = this.a('value') * 10, [g0, g1] = this.a('gap').split(' ').map(Number);
    const ticks = [...Array(11).keys()].map(i => i % 5 ? (i * 10 > g0 && i * 10 < g1 ? '' : `M${i * 17 + .5} 5v6`) : `M${i * 17 + .5} 0v${i * 10 >= g0 && i * 10 <= g1 ? 3 : 11}`).join('');
    const rail = `M0 11H${g0 * 1.7}M${g1 * 1.7} 11H171`;
    return `<style>
      :host { ${PLACED} --w: 349px; --h: 35px; display: flex; border: 2px solid #2c2c2c; border-radius: 7px; background: linear-gradient(#fff, #f0f0f0 8px, #e3e3e3 8px, #cacaca); }
      label { width: 142px; box-sizing: border-box; padding-top: 3px; text-align: center; border-right: 2px solid #2c2c2c; border-radius: 5px 0 0 5px; background: linear-gradient(#e6e6ec, #c2c2ce 8px, #a3a3b3 8px, #8f8d9c); }
      .body { position: relative; flex: 1; margin: 0 16px 0 15px; }
      svg { position: absolute; left: 0; top: 5px; overflow: visible; }
      input { position: absolute; left: -5px; top: 0; width: calc(100% + 10px); height: 31px; margin: 0; background: none; appearance: none; }
      input::-webkit-slider-thumb { appearance: none; box-sizing: border-box; width: 10px; height: 10px; border: 2px solid #000; background: #fff; transform: rotate(45deg); }
      output { position: absolute; top: 3px; ${this.a('side') == 'right' ? `left: calc(${p}% + 13px)` : `right: calc(${100 - p}% + 13px)`}; }
      ${PORT}
      .port { top: 8px; right: -9px; }
    </style>
    <label for="v">${this.className == 'nolabel' ? '' : 'Number Slider'}</label>
    <div class="body"><svg width="171" height="12"><path fill="none" stroke="#a9a9a9" d="${ticks}${rail}"/></svg>
    <input id="v" type="range" min="0" max="10" value="${this.a('value')}"><output for="v">${this.a('text')}</output></div>
    <b class="port r"></b>`;
  }
});

/* [x1, y1, x2, y2, handle length, kind]; kinds: s single, m list, g single selected, gm list selected */
const WIRES = {
  a: [[500, 260, 590, 260, 30, 's'], [500, 304, 590, 294, 40, 's'], [500, 436, 591, 471, 50, 's'],
    [811, 520, 1039, 434, 114, 'm'], [811, 520, 1044, 666, 116, 'm'],
    [916, 704, 1044, 704, 40, 's'], [916, 767, 1044, 704, 64, 's'],
    [1229, 704, 1338, 704, 40, 'gm'], [1229, 704, 1044, 903, 115, 'm']],
  b: [[1793, 524, 2022, 437, 114, 'm'], [1793, 524, 2028, 670, 116, 'm'],
    [1898, 707, 2028, 707, 40, 's'], [1898, 771, 2028, 707, 64, 's'],
    [2212, 707, 2676, 440, 232, 'gm'], [2212, 707, 1924, 903, 110, 'm'],
    [2606, 633, 2669, 635, 30, 's'], [2606, 683, 2669, 682, 30, 's'], [2606, 729, 2669, 729, 30, 's'],
    [2606, 789, 2669, 793, 30, 's'], [2606, 839, 2669, 840, 30, 's'], [2606, 887, 2669, 887, 30, 's'],
    [2941, 648, 2676, 480, 80, 'g'], [2941, 805, 2676, 480, 215, 'g']]
};
customElements.define('gh-wires', class extends Part {
  render() {
    let defs = '';
    const id = this.a('set');
    const body = WIRES[id].map(([x1, y1, x2, y2, h, k], i) => {
      const p = `M${x1} ${y1}C${x1 + h} ${y1} ${x2 - h} ${y2} ${x2} ${y2}`;
      let ink = '#55544f';
      if (k[0] == 'g') {
        defs += `<linearGradient id="w${i}" gradientUnits="userSpaceOnUse" x1="${x1}" y1="${y1}" x2="${x2}" y2="${y2}"><stop offset="0" stop-color="#a9a99b"/><stop offset=".6" stop-color="#8cc654"/><stop offset="1" stop-color="#80d62c"/></linearGradient>`;
        ink = `url(#w${i})`;
      }
      const list = k.endsWith('m');
      return `<path d="${p}" stroke="${ink}" stroke-width="${list ? 8 : 5}"/>` + (list ? `<path d="${p}" stroke="#d0cdc4" stroke-width="2"/>` : '');
    }).join('');
    const blobs = id == 'b' ? '<path fill="#cfccc6" stroke="#aaa89c" d="M2934 625L2952 641 2943 648H2934z"/><path fill="#cfccc6" d="M2667 484L2683 484V502z"/>' : '';
    return `<style>:host { position: absolute; inset: 0; display: block; } svg { width: 100%; height: 100%; display: block; }</style>
    <svg fill="none" aria-hidden="true"><defs>${defs}</defs>${blobs}${body}</svg>`;
  }
});
</script>
</body>
</html>
